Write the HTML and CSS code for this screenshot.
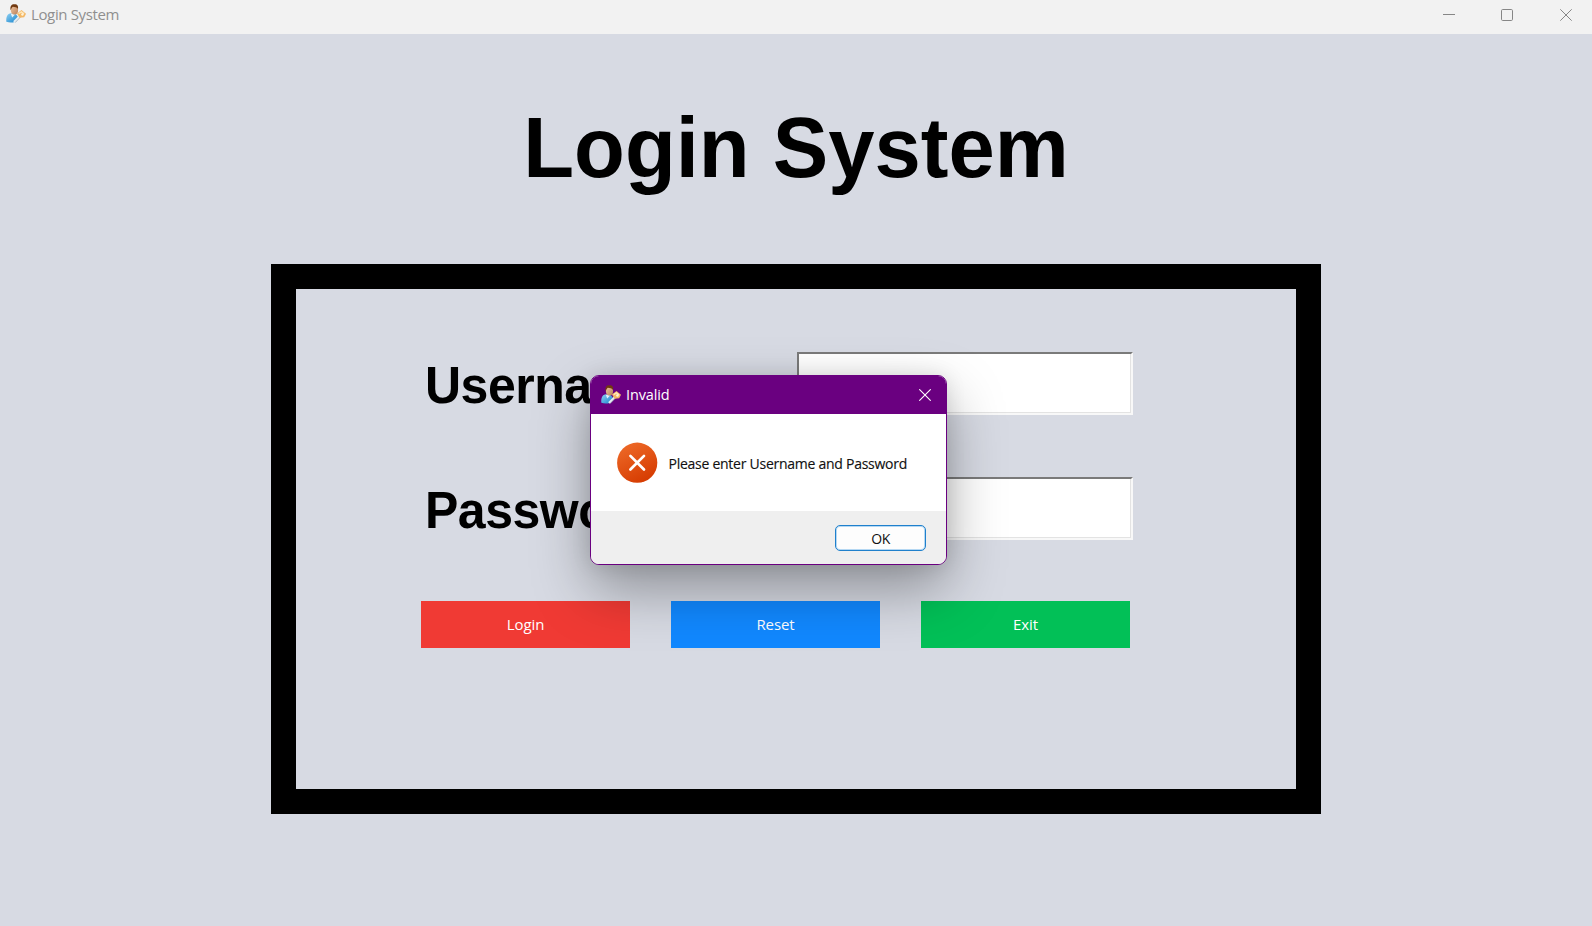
FILE: index.html
```html
<!DOCTYPE html>
<html lang="en">
<head>
<meta charset="utf-8">
<title>Login System</title>
<link rel="stylesheet" href="styles.css">
</head>
<body>
<svg class="defs" width="0" height="0">
  <defs>
    <linearGradient id="shirt" x1="0" y1="0" x2="1" y2="1"><stop offset="0" stop-color="#8fd0f2"/><stop offset="1" stop-color="#1583cc"/></linearGradient>
    <linearGradient id="skin" x1="0" y1="0" x2="1" y2="1"><stop offset="0" stop-color="#f0c6a0"/><stop offset="1" stop-color="#b97f58"/></linearGradient>
    <linearGradient id="error" x1="0.2" y1="0" x2="0.7" y2="1"><stop offset="0" stop-color="#ee6a28"/><stop offset="1" stop-color="#d53a00"/></linearGradient>
    <symbol id="user-key" viewBox="0 0 20 20">
      <path d="M0.3 17.8 C-0.2 12 2 9.6 5 9.3 L10 10.3 L12 13 L9 17.7 Q5 19.4 0.3 17.8Z" fill="url(#shirt)"/>
      <path d="M4.8 9.8 L6.2 13.6 L9 10.5Z" fill="#e6f2fa"/>
      <ellipse cx="8.5" cy="6" rx="3.6" ry="4.5" fill="url(#skin)"/>
      <path d="M4.6 6.2 C3.8 1.6 5.8 0 8.6 0.2 C11.6 0.2 12.4 2 12 5 C10.8 2.8 8.8 3 6.8 2.7 C5.6 3.5 5.4 5 4.6 6.2Z" fill="#71390f"/>
      <path d="M14 12 L8 18" stroke="#e6edf2" stroke-width="2.4"/>
      <path d="M14.7 12.8 L9.2 18.6" stroke="#7d93a2" stroke-width="0.6"/>
      <path d="M11 9.4 L15.5 6 L20 9.7 L18.2 13.2 L13.5 13.8Z" fill="#f3b765"/>
      <path d="M12.6 9.6 L15.4 7.8 L18 9.8" stroke="#ffe5b5" stroke-width="1.5" fill="none"/>
      <circle cx="16.4" cy="10.5" r="1.2" fill="#fff3db"/>
    </symbol>
  </defs>
</svg>
<div class="window">
  <header class="titlebar">
    <svg class="app-icon" width="20" height="20"><use href="#user-key"/></svg>
    <span class="titlebar-text">Login System</span>
    <div class="controls">
      <svg width="12" height="12" viewBox="0 0 12 12"><path d="M0 5.5H12"/></svg>
      <svg width="12" height="12" viewBox="0 0 12 12"><rect x="0.5" y="0.5" width="11" height="11" rx="1.2"/></svg>
      <svg width="12" height="12" viewBox="0 0 12 12"><path d="M0.3 0.3L11.7 11.7M11.7 0.3L0.3 11.7"/></svg>
    </div>
  </header>
  <main class="content">
    <h1 class="heading">Login System</h1>
    <form class="panel">
      <label class="label">Username</label><div class="entry"></div>
      <label class="label">Password</label><div class="entry"></div>
      <div class="actions">
        <button type="button" class="action login">Login</button>
        <button type="button" class="action reset">Reset</button>
        <button type="button" class="action exit">Exit</button>
      </div>
    </form>
  </main>
  <section class="dialog">
    <header class="dialog-title">
      <svg width="20" height="20"><use href="#user-key"/></svg>
      <span class="dialog-caption">Invalid</span>
      <svg class="dialog-close" width="12" height="12" viewBox="0 0 12 12"><path d="M0.3 0.3L11.7 11.7M11.7 0.3L0.3 11.7"/></svg>
    </header>
    <div class="dialog-body">
      <svg width="41" height="41" viewBox="0 0 41 41"><circle cx="20.2" cy="20.7" r="20.1" fill="url(#error)"/><path d="M13.4 13.9L27 27.5M27 13.9L13.4 27.5" stroke="#fff" stroke-width="2.7" stroke-linecap="round"/></svg>
      <span class="message">Please enter Username and Password</span>
    </div>
    <footer class="dialog-footer"><button type="button" class="ok">OK</button></footer>
  </section>
</div>
</body>
</html>
```
FILE: styles.css
```css
* { box-sizing: border-box; }
body { margin: 0; font-family: "Open Sans", "Noto Sans", sans-serif; }
button { font-family: inherit; padding: 0; margin: 0; border: 0; }
.defs { position: absolute; }
.window { position: relative; width: 1592px; height: 926px; overflow: hidden; background: #d7dae3; }
.titlebar { display: flex; align-items: flex-start; height: 34px; padding: 3px 20px 0 6px; background: #f2f2f2; }
.app-icon { margin-top: 1px; }
.titlebar-text { margin-left: 5px; font-size: 15px; line-height: 22px; letter-spacing: -0.37px; color: #8f8f8f; }
.controls { display: flex; margin: 6px 0 0 auto; }
.controls svg { margin-left: 47px; fill: none; stroke: #868686; stroke-width: 1; }
.controls svg:nth-child(2) { margin-left: 46px; }
.content { display: flex; flex-direction: column; align-items: center; }
.heading { height: 230px; margin: 0; padding-top: 66px; font: bold 83.2px/96px "Liberation Sans", Arial, sans-serif; white-space: nowrap; transform: scaleY(1.035); }
.panel { display: grid; grid-template-columns: 369px 337px; grid-template-rows: 64px 64px 47px; row-gap: 61px; width: 1050px; height: 550px; padding: 63px 0 0 132px; border: 25px solid #000; }
.label { align-self: center; margin: 1px 0 0 -3px; font: bold 50px/56px "Liberation Sans", Arial, sans-serif; letter-spacing: -0.5px; transform: scaleY(1.03); }
/* letters past the dialog's left edge stay behind it */
.label:first-child { clip-path: inset(0 203px 0 0); }
.entry { width: 336px; height: 63px; background: #fff; border: 2px solid; border-color: #7a7a7a #f8f8f8 #f8f8f8 #7a7a7a; box-shadow: inset -1px -1px #e3e3e3; }
.actions { grid-column: 1 / 3; display: flex; gap: 41px; margin: -1px 0 0 -7px; }
.action { width: 209px; height: 47px; padding-bottom: 1px; font-size: 15px; letter-spacing: -0.1px; color: #fff; }
.login { background: #f03a34; }
.reset { background: #1188ff; }
.exit { background: #02c057; }
.dialog { position: absolute; left: 590px; top: 375px; width: 357px; height: 190px; display: flex; flex-direction: column; border: 1px solid #6a0080; border-radius: 9px; overflow: hidden; background: #fff; box-shadow: 0 24px 56px rgba(0,0,0,.34), 0 0 20px rgba(0,0,0,.1); }
.dialog-title { display: flex; align-items: center; height: 38px; padding: 0 15px 0 10px; background: #6a0080; color: #fff; }
.dialog-caption { margin-left: 5px; font-size: 14.5px; line-height: 20px; letter-spacing: -0.15px; }
.dialog-close { margin-left: auto; fill: none; stroke: #fff; stroke-width: 1.1; }
.dialog-body { display: flex; align-items: center; flex: 1; padding-left: 26px; }
.message { margin-left: 10.5px; padding-top: 2px; font-size: 14px; letter-spacing: -0.26px; color: #111; white-space: nowrap; -webkit-text-stroke: 0.15px #111; }
.dialog-footer { display: flex; justify-content: flex-end; height: 53px; padding: 14px 20px 0 0; background: #efefef; }
.ok { width: 91px; height: 26px; border: 1px solid #1f80cc; box-shadow: inset 0 0 0 1px #b5d8f3; border-radius: 5px; background: #fdfdfd; font-size: 14px; letter-spacing: -0.5px; color: #111; }
```
